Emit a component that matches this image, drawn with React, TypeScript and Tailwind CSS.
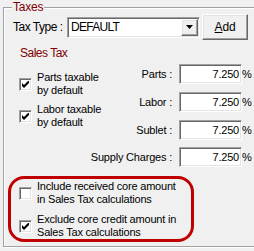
const sunken =
  'border border-t-[#a0a0a0] border-l-[#a0a0a0] border-b-white border-r-white shadow-[inset_1px_1px_0_#696969,inset_-1px_-1px_0_#e3e3e3]';
const raised =
  'border border-t-white border-l-white border-b-[#696969] border-r-[#696969] shadow-[inset_-1px_-1px_0_#a0a0a0,inset_1px_1px_0_#e3e3e3]';

function Check({ checked }: { checked?: boolean }) {
  return (
    <span className={`flex h-[13px] w-[13px] shrink-0 items-center justify-center bg-white ${sunken}`}>
      {checked && (
        <svg width="7" height="7" viewBox="0 0 7 7">
          <polygon points="0,2 2,4 7,-1 7,2 2,7 0,5" fill="#000" />
        </svg>
      )}
    </span>
  );
}

function CheckRow({ checked, lines }: { checked?: boolean; lines: string[] }) {
  return (
    <div className="flex items-center">
      <Check checked={checked} />
      <div className="ml-[5px] whitespace-nowrap">
        {lines.map((l) => (
          <div key={l}>{l}</div>
        ))}
      </div>
    </div>
  );
}

function RateRow({ label, className = '' }: { label: string; className?: string }) {
  return (
    <div className={`flex items-center ${className}`}>
      <span className="flex w-[69px] justify-end whitespace-nowrap">{label}</span>
      <div className={`ml-[7px] flex h-[20px] w-[63px] items-center justify-end bg-white pr-[2px] ${sunken}`}>7.250</div>
      <span>%</span>
    </div>
  );
}

export default function App() {
  return (
    <div className="h-[251px] w-[254px] overflow-hidden bg-[#f0f0f0] font-['Liberation_Sans',Arial,sans-serif] text-[11px] leading-[13px] tracking-[-0.2px] text-black">
      <div className="relative ml-[3px] mt-[7px] h-[240px] w-[270px] border border-[#a0a0a0] shadow-[inset_1px_1px_0_white,1px_1px_0_white]">
        <span className="absolute left-[8px] top-[-8px] bg-[#f0f0f0] px-[1px] text-[12px] leading-[14px] text-[#800000]">
          Taxes
        </span>

        {/* Tax type */}
        <div className="mt-[6px] flex items-center">
          <span className="ml-[9px] w-[54px] shrink-0 whitespace-nowrap text-[12px] tracking-[-0.5px]">Tax Type :</span>
          <div className={`flex h-[21px] w-[133px] shrink-0 items-center justify-between bg-white ${sunken}`}>
            <span className="pl-[3px] text-[12px] tracking-[-0.7px]">DEFAULT</span>
            <span className={`mr-[1px] flex h-[17px] w-[17px] items-center justify-center bg-[#f0f0f0] ${raised}`}>
              <svg width="7" height="4" viewBox="0 0 7 4">
                <polygon points="0,0 7,0 3.5,4" fill="#000" />
              </svg>
            </span>
          </div>
          <button className={`ml-[2px] h-[26px] w-[46px] shrink-0 bg-[#f0f0f0] text-[12px] ${raised}`}>
            <span className="underline">A</span>dd
          </button>
        </div>

        <div className="ml-[16px] mt-[6px] text-[12px] leading-[14px] tracking-[-0.5px] text-[#800000]">Sales Tax</div>

        <div className="flex">
          <div className="ml-[15px] mt-[11px] w-[84px] shrink-0">
            <CheckRow checked lines={['Parts taxable', 'by default']} />
            <div className="mt-[6px]">
              <CheckRow checked lines={['Labor taxable', 'by default']} />
            </div>
          </div>
          <div className="mt-[4px]">
            <RateRow label="Parts :" />
            <RateRow label="Labor :" className="mt-[8px]" />
            <RateRow label="Sublet :" className="mt-[8px]" />
            <RateRow label="Supply Charges :" className="mt-[7px]" />
          </div>
        </div>

        <div className="ml-[4px] mt-[9px] h-[66px] w-[186px] rounded-[16px] border-[3px] border-[#c00000] pl-[8px] pt-[1px]">
          <CheckRow lines={['Include received core amount', 'in Sales Tax calculations']} />
          <div className="mt-[7px]">
            <CheckRow checked lines={['Exclude core credit amount in', 'Sales Tax calculations']} />
          </div>
        </div>
      </div>
    </div>
  );
}
